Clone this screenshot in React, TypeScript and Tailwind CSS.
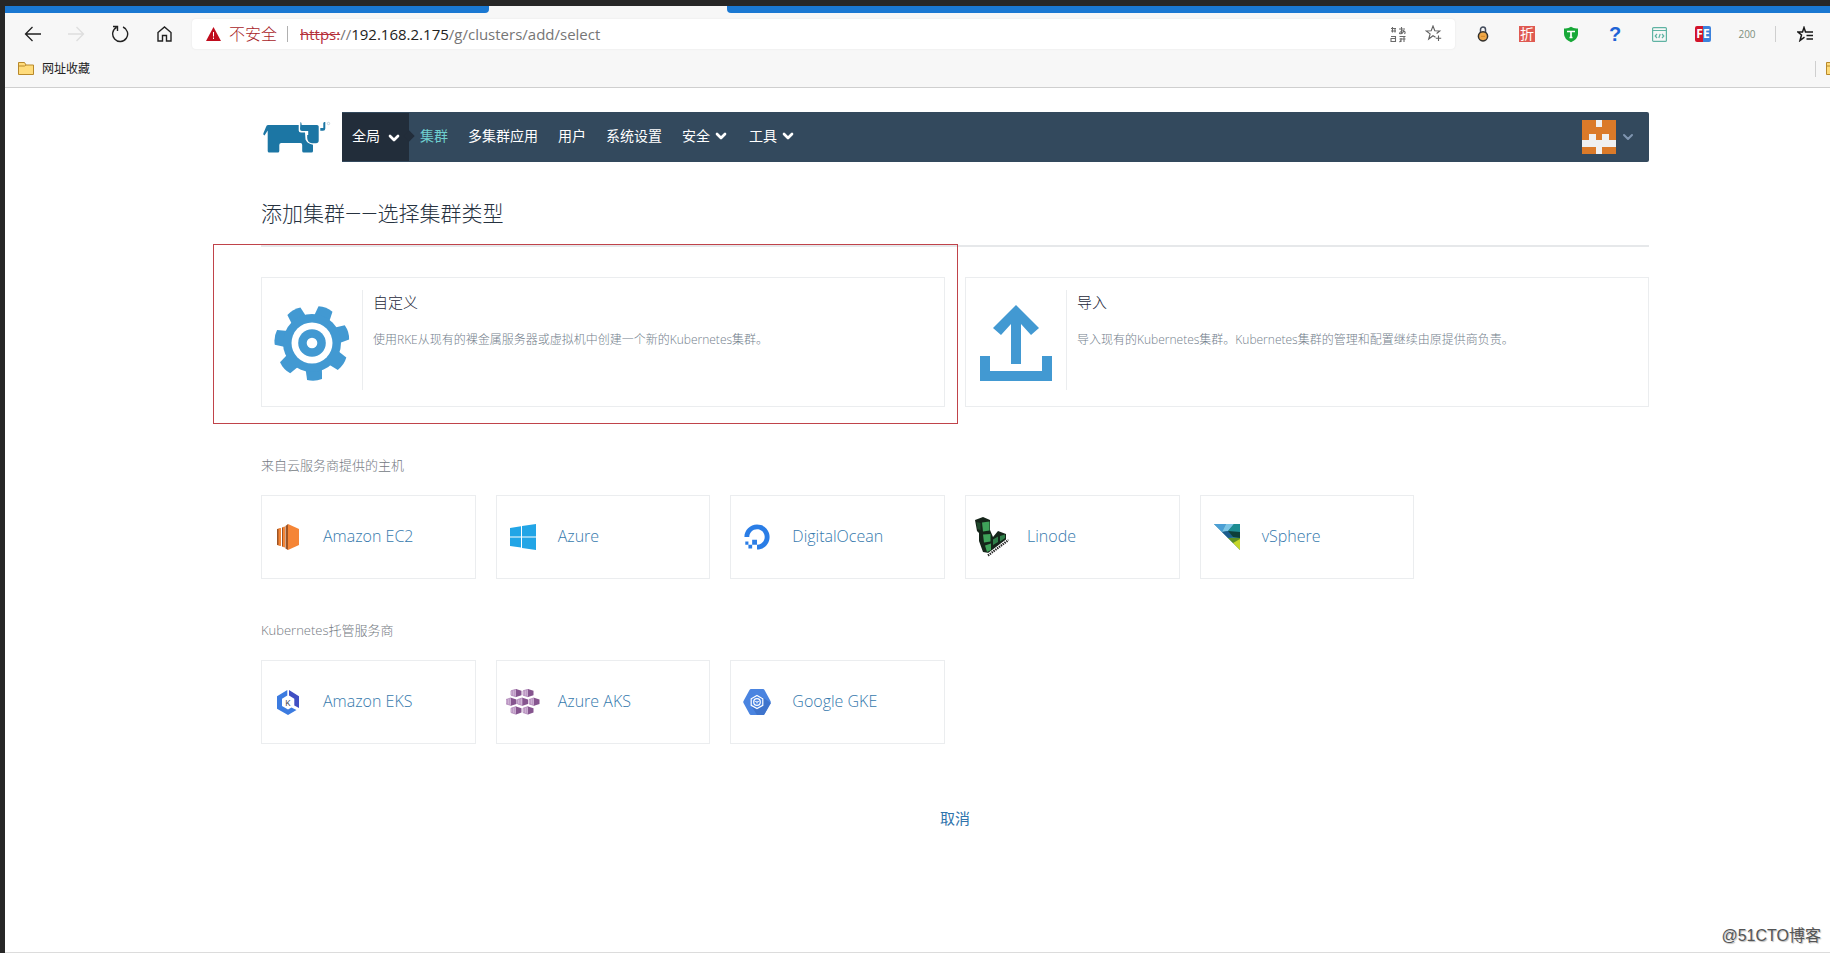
import type { ReactNode } from "react";
import { ChevronDown } from "lucide-react";
import { FaDigitalOcean } from "react-icons/fa";

/* ---------- browser icons ---------- */

function FolderIcon() {
  return (
    <svg width="16" height="13" viewBox="0 0 16 13" className="shrink-0">
      <path d="M.5 2V12.5H15.5V3H8L6.5.5H.5Z" fill="#ffdc7c" stroke="#b8892b" />
      <path d="M.5 4H6.5L8 3" fill="none" stroke="#b8892b" />
    </svg>
  );
}

function TranslateIcon() {
  return (
    <svg width="17" height="17" viewBox="0 0 17 17" fill="none" stroke="#6a6a6a" strokeWidth="1.1">
      <path d="M1 2.5H6M1 5H6M2.5 1V6.500M5 2.500V6.500M9 3H15M11.500 1V7M14 4.500Q10 5 9.500 7.500Q12 8.500 14 5Q16 6 14.500 8" />
      <path d="M1 10.500H5.500V15.500H1V12.500H5M9.500 10.500H15.500M9.500 13H15.500M11 12V16M14 10V16M9.500 16L11 14.500" />
    </svg>
  );
}

function StarPlusIcon() {
  return (
    <svg width="18" height="18" viewBox="0 0 18 18" fill="none" stroke="#5f5f5f" strokeWidth="1.1">
      <path d="M10.500 12.200L8 10.700 3.700 14 5.100 8.900 1.200 5.900 6.200 5.700 8 1 9.800 5.700 14.800 5.900 11.600 8.500" />
      <path d="M13.500 10.500V16M10.800 13.300H16.200" />
    </svg>
  );
}

function FavoritesIcon() {
  return (
    <svg width="17" height="16" viewBox="0 0 17 16" fill="none" stroke="#1a1a1a" strokeWidth="1.500">
      <path d="M7.500 11.200L3 14.500 4.500 9 1 6H5.500L7 1.500 8.500 6H16M9.500 9.500H16M9.500 13H16" />
    </svg>
  );
}

function PadlockIcon() {
  return (
    <svg width="12" height="16" viewBox="0 0 12 16">
      <path d="M3.500 7V3.500a2.500 2.500 0 0 1 5 0V7" fill="none" stroke="#444c5c" strokeWidth="1.500" />
      <circle cx="6" cy="10.300" r="4.600" fill="#f0a848" stroke="#33302c" strokeWidth="1.500" />
      <path d="M4 10.300h4" stroke="#d58825" />
    </svg>
  );
}

function ShieldIcon() {
  return (
    <svg width="16" height="17" viewBox="0 0 16 17">
      <path d="M1 2.500Q5 3 8 .8Q11 3 15 2.500V8Q15 13 8 16.200Q1 13 1 8Z" fill="#18a838" />
      <path d="M4 5.500H12M8 5.500V12M6.500 11.500H9.500" fill="none" stroke="#fff" strokeWidth="1.700" />
    </svg>
  );
}

function CodeWindowIcon() {
  return (
    <svg width="15" height="15" viewBox="0 0 15 15" fill="none" stroke="#5fb3a3" strokeWidth="1.200">
      <rect x=".6" y=".6" width="13.800" height="13.800" rx="1" />
      <path d="M1 3.500H14M5 7L3.200 9 5 11M10 7L11.800 9 10 11M8.200 7L6.800 11" />
    </svg>
  );
}

/* ---------- page icons ---------- */

function RancherLogo() {
  return (
    <svg width="68" height="36" viewBox="0 0 68 36" fill="#1c76a4">
      <path d="M5 6Q3.500 6 3 8L.3 14.500Q0 16 1.500 16.500L4.700 11.500V32Q4.700 33.500 6.200 33.500H14.800Q16.300 33.500 16.300 32V26Q16.300 24 18.300 24H37.500Q39.200 24 39.200 26V32Q39.200 33.500 40.700 33.500H48.500Q50 33.500 50 32V25.700Q44.500 25 42.500 20.500L42 13.500H38Q35.700 13.500 35.700 11.500V6Z" />
      <path d="M37.500 3Q38.500 3 38.700 6H54Q55.700 6 55.700 7.500V21.500Q55.700 24.300 53 24.300H49Q44.500 24 44.200 19V16H45.200V12H39Q37 12 37 10Z" />
      <path d="M57.300 9H60.300V4Q61 2.500 62.300 3V9.500Q62.300 11.800 60 11.800H57.300Z" />
      <circle cx="65.500" cy="4.500" r="1.200" fill="none" stroke="#9fb9ca" strokeWidth=".6" />
    </svg>
  );
}

function Identicon() {
  const off = ["2 0", "1 2", "3 2", "0 3", "1 3", "2 3", "3 3", "4 3", "2 4"];
  return (
    <svg width="34" height="34" viewBox="0 0 5 5" shapeRendering="crispEdges">
      <rect width="5" height="5" fill="#db7a29" />
      {off.map((cell) => {
        const [x, y] = cell.split(" ");
        return <rect key={cell} x={x} y={y} width="1" height="1" fill="#f0f0f0" />;
      })}
    </svg>
  );
}

function GearIcon() {
  const teeth = [0, 1, 2, 3, 4, 5, 6];
  return (
    <svg width="76" height="76" viewBox="-38 -38 76 76" className="shrink-0">
      {teeth.map((i) => (
        <path
          key={i}
          d="M-8.500 20L-7.500 36.500Q0 39 7.500 36.500L8.500 20Z"
          fill="#4299d2"
          transform={`rotate(${(i * 360) / 7 - 4})`}
        />
      ))}
      <circle r="29" fill="#4299d2" />
      <circle r="20.500" fill="#fff" />
      <circle r="13.800" fill="#4299d2" />
      <circle r="5.300" fill="#fff" />
    </svg>
  );
}

function UploadIcon() {
  return (
    <svg width="72" height="76" viewBox="0 0 72 76" fill="#4299d2" className="shrink-0">
      <path d="M36 0L59 23 51 30 41 19V59H31V19L21 30 13 23Z" />
      <path d="M0 51H10V66H62V51H72V76H0Z" />
    </svg>
  );
}

function Ec2Icon() {
  return (
    <svg width="22" height="26" viewBox="0 0 22 26">
      <path d="M0 5L3 4.500V21.500L0 21Z" fill="#9d5425" />
      <path d="M1.500 4.500L4 4V22L1.500 21.500Z" fill="#f58536" />
      <path d="M5 3.500L6.500 3V23L5 22.500Z" fill="#9d5425" />
      <path d="M6 3L8 2.500V23.500L6 23Z" fill="#f58536" />
      <path d="M8.500 2L11 0V26L8.500 24.500Z" fill="#9d5425" />
      <path d="M11 0L22 5V21L11 26Z" fill="#f58536" />
    </svg>
  );
}

function WindowsIcon() {
  return (
    <svg width="26" height="26" viewBox="0 0 26 26" fill="#22a5e6">
      <path d="M0 4L11 2.300V12.500H0ZM12 2L26 0V12.500H12ZM0 13.500H11V23.500L0 22ZM12 13.500H26V26L12 24Z" />
    </svg>
  );
}

function LinodeIcon() {
  return (
    <svg width="34" height="40" viewBox="0 0 34 40">
      <path d="M0 3L8 0 15 3V13L18 20 23 14 31 17V23L14 36 8 35 4 24V16L2 14Z" fill="#15251a" />
      <path d="M7 5.500L14.500 4.500V13.500L8 14.500Z" fill="#3fa35a" />
      <path d="M8 17.500L15.500 17V24.500L9 25.500ZM10 28.500L16 26.500V33L12 35Z" fill="#3fa35a" />
      <path d="M18 22.500L23 19.500V25L18 28ZM25 19L30 17.500V21L25 24.500Z" fill="#2f7f49" />
      <path d="M1.500 5L5.500 6V13L2.500 12Z" fill="#1f4a2c" />
      <path d="M13 38.500L33.500 23" stroke="#fff" strokeWidth="4" />
      <path d="M13 38.500L33.500 23" stroke="#222" strokeWidth="2.200" strokeDasharray="1.400 .9" />
    </svg>
  );
}

function VsphereIcon() {
  return (
    <svg width="26" height="26" viewBox="0 0 26 26">
      <path d="M0 0H26V26Z" fill="#2c7f94" />
      <path d="M0 0H12L8 8Z" fill="#4b9fd5" />
      <path d="M12 0H20L14 7 8 8Z" fill="#7cc5e6" />
      <path d="M20 0H26V8L14 7Z" fill="#1d8d92" />
      <path d="M8 8L14 7 19 13 14 14Z" fill="#1b5d8c" />
      <path d="M14 7L26 8V14L19 13Z" fill="#0d3f3a" />
      <path d="M14 14L26 14V19L19 19Z" fill="#5d8f22" />
      <path d="M19 19L26 15V26Z" fill="#c5d629" />
    </svg>
  );
}

function EksIcon() {
  return (
    <svg width="22" height="25" viewBox="0 0 22 25">
      <path d="M10.300 0V5.500L5 8.700V16L11 19.500 14.500 17.500 19.500 20 11 25 0 18.700V6.200Z" fill="#3c7be0" />
      <path d="M12 0L22 6.200V18L17.300 15.500V8.700L12 5.500Z" fill="#4150c4" />
      <text x="11" y="15.500" textAnchor="middle" fontSize="8" fill="#4a4a55" className="font-[Inter] font-normal">
        K
      </text>
    </svg>
  );
}

function AksIcon() {
  const boxes = [[5, 0], [17, 0], [0, 8.700], [11.500, 8.700], [23, 8.700], [5, 17.400], [17, 17.400]];
  return (
    <svg width="34" height="26" viewBox="0 0 34 26">
      {boxes.map(([x, y]) => (
        <g key={`${x}-${y}`} transform={`translate(${x} ${y})`}>
          <path d="M0 1.800L5 .2V7.800L0 6.200Z" fill="#dcc6e0" stroke="#a678b0" strokeWidth=".7" />
          <path d="M1.700 1.500V6.500M3.300 1V7" stroke="#a678b0" strokeWidth=".7" />
          <path d="M5 0L10.500 1.800V6.200L5 8Z" fill="#86558f" />
        </g>
      ))}
    </svg>
  );
}

function GkeIcon() {
  return (
    <svg width="28" height="26" viewBox="0 0 28 26">
      <path d="M8 0H20Q21 0 21.500 1L27.500 12Q28 13 27.500 14L21.500 25Q21 26 20 26H8Q7 26 6.500 25L.5 14Q0 13 .5 12L6.500 1Q7 0 8 0Z" fill="#4a84e0" />
      <path d="M19 8L28 14 21 26H14L9 18Z" fill="#3e74cc" />
      <path d="M14 6.500L19.800 9.800V16.300L14 19.600 8.200 16.300V9.800Z" fill="#4a84e0" stroke="#fff" strokeWidth="1.200" />
      <circle cx="14" cy="13" r="3.300" fill="none" stroke="#fff" strokeWidth="1.200" />
      <path d="M14 12V14.500M11.500 12L14 13.200 16.500 12" stroke="#fff" strokeWidth=".8" fill="none" />
    </svg>
  );
}

/* ---------- browser chrome ---------- */

function ToolButton({ label, children }: { label: string; children: ReactNode }) {
  return (
    <button type="button" aria-label={label} className="flex h-8 w-11 shrink-0 items-center justify-center">
      {children}
    </button>
  );
}

function BrowserBar() {
  return (
    <header className="border-b border-[#cfcfcf] bg-[#f7f7f7] font-normal">
      <div className="flex h-[7px] justify-between">
        <div className="w-[484px] rounded-br bg-[#1a78d2]" />
        <div className="ml-[238px] flex-1 rounded-bl bg-[#1a78d2]" />
      </div>

      <div className="flex items-center pt-[5px] pl-[5px]">
        <ToolButton label="后退">
          <svg width="17" height="16" viewBox="0 0 17 16" fill="none" stroke="#222" strokeWidth="1.300">
            <path d="M17 8H1.500M8.500 1L1.500 8 8.500 15" />
          </svg>
        </ToolButton>
        <ToolButton label="前进">
          <svg width="17" height="16" viewBox="0 0 17 16" fill="none" stroke="#dedede" strokeWidth="1.300">
            <path d="M0 8H15.500M8.500 1L15.500 8 8.500 15" />
          </svg>
        </ToolButton>
        <ToolButton label="刷新">
          <svg width="18" height="18" viewBox="0 0 18 18" fill="none" stroke="#222" strokeWidth="1.400">
            <path d="M12 2A7.500 7.500 0 1 1 5.500 2.400M2 1.500H6.500V6" />
          </svg>
        </ToolButton>
        <ToolButton label="主页">
          <svg width="15" height="16" viewBox="0 0 15 16" fill="none" stroke="#222" strokeWidth="1.400">
            <path d="M1 6.500L7.500 1 14 6.500V15H9.500V9.500H5.500V15H1Z" />
          </svg>
        </ToolButton>

        <div className="ml-1.5 flex h-[30px] flex-1 items-center rounded-sm bg-white pr-3 pl-3.5 text-[15px] shadow-[0_0_2px_#e2e2e2]">
          <svg width="15" height="14" viewBox="0 0 15 14">
            <path d="M7.500 0L15 14H0Z" fill="#c00d1e" />
            <path d="M7.500 5V9.500M7.500 10.500V12" stroke="#fff" />
          </svg>
          <span className="ml-2 text-base font-light text-[#a81c28]">不安全</span>
          <span className="mr-3 ml-2.5 h-4 w-px bg-[#b0b0b0]" />
          <div role="textbox" aria-label="地址" tabIndex={0} className="flex-1 text-[#767676]">
            <span className="text-[#b5303a] line-through">https:</span>//
            <span className="text-[#222]">192.168.2.175</span>/g/clusters/add/select
          </div>
          <div className="flex gap-[18px]">
            <button type="button" aria-label="翻译">
              <TranslateIcon />
            </button>
            <button type="button" aria-label="收藏此页">
              <StarPlusIcon />
            </button>
          </div>
        </div>

        <div className="ml-1.5 flex items-center">
          <ToolButton label="密码">
            <PadlockIcon />
          </ToolButton>
          <ToolButton label="折扣">
            <span className="flex size-4 items-center justify-center bg-[#df5a52] text-sm text-white">折</span>
          </ToolButton>
          <ToolButton label="防护">
            <ShieldIcon />
          </ToolButton>
          <ToolButton label="帮助">
            <span className="font-['Liberation_Sans',sans-serif] text-xl font-bold text-[#1f63d6]">?</span>
          </ToolButton>
          <ToolButton label="代码">
            <CodeWindowIcon />
          </ToolButton>
          <ToolButton label="前端助手">
            <span className="flex size-4 items-center justify-center rounded-xs bg-linear-to-r from-[#d3142a] from-50% to-[#3c82dc] to-50% text-xs font-bold text-white">
              FE
            </span>
          </ToolButton>
          <ToolButton label="状态码">
            <span className="text-[10px] text-[#7d8f7d]">200</span>
          </ToolButton>
          <span className="ml-1.5 h-4 w-px bg-[#cfcfcf]" />
          <ToolButton label="收藏夹">
            <span className="ml-3.5">
              <FavoritesIcon />
            </span>
          </ToolButton>
          <span className="w-[10px]" />
        </div>
      </div>

      <div className="flex h-[37px] items-center justify-between overflow-hidden pl-[13px] text-xs text-[#222]">
        <a href="#bookmarks" className="flex items-center gap-2">
          <FolderIcon />
          网址收藏
        </a>
        <div className="flex w-[15px] items-center gap-2.5 overflow-hidden">
          <span className="h-4 w-px shrink-0 bg-[#cfcfcf]" />
          <FolderIcon />
        </div>
      </div>
    </header>
  );
}

/* ---------- page ---------- */

const NAV_ITEMS = [
  { label: "集群", active: true },
  { label: "多集群应用" },
  { label: "用户" },
  { label: "系统设置" },
  { label: "安全", menu: true },
  { label: "工具", menu: true },
];

const NODE_PROVIDERS = [
  { name: "Amazon EC2", icon: <Ec2Icon /> },
  { name: "Azure", icon: <WindowsIcon /> },
  { name: "DigitalOcean", icon: <FaDigitalOcean size={26} color="#2a7de6" /> },
  { name: "Linode", icon: <LinodeIcon /> },
  { name: "vSphere", icon: <VsphereIcon /> },
];

const HOSTED_PROVIDERS = [
  { name: "Amazon EKS", icon: <EksIcon /> },
  { name: "Azure AKS", icon: <AksIcon /> },
  { name: "Google GKE", icon: <GkeIcon /> },
];

function NavBar() {
  return (
    <div className="flex items-center">
      <a href="#home" aria-label="Rancher" className="w-[81px] shrink-0 pl-0.5">
        <RancherLogo />
      </a>
      <nav className="flex h-[50px] flex-1 items-center rounded-r-xs bg-[#33495d] pb-0.5 text-sm font-normal text-white">
        <button type="button" className="relative -mb-0.5 flex h-full w-[67px] items-center gap-1.5 bg-[#222d3a] pb-0.5 pl-2.5 h-[50px]">
          全局
          <ChevronDown size={16} strokeWidth={4} className="mt-1" />
          <span className="absolute -right-1 size-2 rotate-45 bg-[#222d3a]" />
        </button>
        <div className="flex items-center gap-5 pl-[11px]">
          {NAV_ITEMS.map((item) =>
            item.menu ? (
              <button key={item.label} type="button" className="flex items-center gap-[3px]">
                {item.label}
                <ChevronDown size={16} strokeWidth={4} />
              </button>
            ) : (
              <a key={item.label} href="#nav" className={item.active ? "text-[#6fd0cf]" : ""}>
                {item.label}
              </a>
            )
          )}
        </div>
        <button type="button" aria-label="用户菜单" className="mt-0.5 mr-[13px] ml-auto flex items-center gap-1 text-[#7f95b0]">
          <Identicon />
          <ChevronDown size={16} strokeWidth={3} />
        </button>
      </nav>
    </div>
  );
}

function TypeCard({ icon, title, text }: { icon: ReactNode; title: string; text: string }) {
  return (
    <button type="button" className="flex h-[130px] border border-[#ebedef] pt-3 pb-4 text-left">
      <span className="flex h-full w-[101px] shrink-0 items-center justify-center border-r border-[#ebedef] pt-1.5">
        {icon}
      </span>
      <span className="pl-2.5">
        <span className="block text-[15px] leading-6 text-[#26283a]">{title}</span>
        <span className="mt-[18px] block text-xs leading-4 text-[#73808c]">{text}</span>
      </span>
    </button>
  );
}

function ProviderSection({ title, items }: { title: string; items: { name: string; icon: ReactNode }[] }) {
  return (
    <section>
      <h2 className="text-[13px] leading-5 text-[#73797f]">{title}</h2>
      <div className="mt-5 grid grid-cols-6 gap-5">
        {items.map((item) => (
          <a key={item.name} href="#provider" className="flex h-[84px] items-center border border-[#ebedef] text-[#3579ad]">
            <span className="flex w-[52px] shrink-0 justify-center">{item.icon}</span>
            <span className="pb-0.5 pl-[9px]">{item.name}</span>
          </a>
        ))}
      </div>
    </section>
  );
}

export default function App() {
  return (
    <div className="relative flex min-h-screen flex-col overflow-hidden border-t-[6px] border-l-[5px] border-[#272727] bg-white font-['Open_Sans','Noto_Sans_CJK_SC',sans-serif] font-light">
      <BrowserBar />

      <main className="flex-1 border-b border-[#dcdcdc] pt-6 pr-[181px] pl-[256px]">
        <NavBar />

        <h1 className="mt-[38px] font-[Roboto,'Noto_Sans_CJK_SC',sans-serif] text-[21px] leading-7 text-[#26323f]">
          添加集群——选择集群类型
        </h1>

        <div className="relative mt-[17px] border-t-2 border-[#e6e8ea] pt-[30px]">
          <div className="grid grid-cols-2 gap-5">
            <TypeCard
              icon={<GearIcon />}
              title="自定义"
              text="使用RKE从现有的裸金属服务器或虚拟机中创建一个新的Kubernetes集群。"
            />
            <TypeCard
              icon={<UploadIcon />}
              title="导入"
              text="导入现有的Kubernetes集群。Kubernetes集群的管理和配置继续由原提供商负责。"
            />
          </div>
          {/* highlight around the first option */}
          <div className="pointer-events-none absolute -top-[3px] right-[calc(50%-3px)] -bottom-[17px] -left-12 border border-[#c0434a]" />
        </div>

        <div className="mt-12 space-y-[41px]">
          <ProviderSection title="来自云服务商提供的主机" items={NODE_PROVIDERS} />
          <ProviderSection title="Kubernetes托管服务商" items={HOSTED_PROVIDERS} />
        </div>

        <div className="mt-[62px] text-center">
          <button type="button" className="text-[15px] leading-6 font-normal text-[#2f73ac]">
            取消
          </button>
        </div>
      </main>

      <div className="absolute right-[9px] bottom-[5px] font-['Liberation_Sans','Noto_Sans_CJK_SC',sans-serif] text-base leading-6 font-normal text-[#555] [text-shadow:1px_1px_1px_#bbb]">
        @51CTO博客
      </div>
    </div>
  );
}
